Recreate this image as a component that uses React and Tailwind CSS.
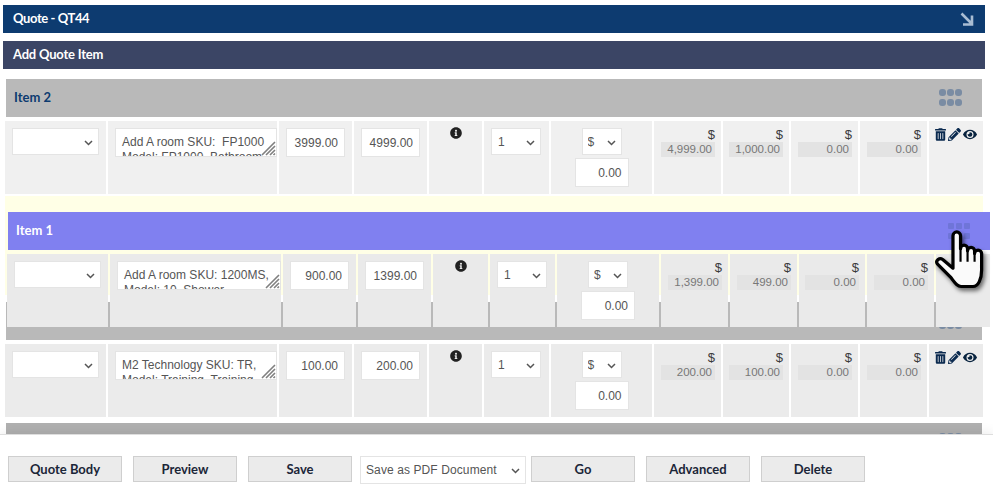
import React from "react";
import { FaEye, FaInfoCircle, FaPencilAlt, FaTrashAlt } from "react-icons/fa";

const staticCols = "grid-cols-[101px_169px_73px_73px_53px_65px_101px_67px_66px_67px_67px_54px]";
const dragCols = "grid-cols-[101px_171px_73px_73px_55px_65px_102px_67px_67px_66px_67px_54px]";

function Dots({ className, dot = "w-[7px] h-[7px] rounded-[3px]" }) {
  return (
    <div className={"grid grid-cols-3 " + className}>
      {[0, 1, 2, 3, 4, 5].map((i) => (
        <span key={i} className={"bg-current " + dot} />
      ))}
    </div>
  );
}

function Hatch() {
  return (
    <svg viewBox="0 0 15 15" className="absolute right-px bottom-px w-[15px] h-[15px]">
      <path d="M1 14L14 1M5 14L14 5M9 14L14 9M12.5 14L14 12.5" stroke="#808080" strokeWidth="1.6" fill="none" />
    </svg>
  );
}

function Chevron() {
  return (
    <svg viewBox="0 0 9 6" className="absolute right-[6px] top-1/2 -mt-[2px] w-[9px] h-[6px] pointer-events-none">
      <path d="M1 1l3.500 3.500L8 1" stroke="#555" strokeWidth="1.500" fill="none" />
    </svg>
  );
}

function NativeSelect({ className, options, value, pad = "pl-[6px]" }) {
  return (
    <div className={"relative " + className}>
      <select
        defaultValue={value}
        className={"appearance-none block w-full h-full bg-white border border-[#e4e4e4] text-[12px] text-[#555] font-['Liberation_Sans',sans-serif] " + pad}
      >
        {options.map((o) => (
          <option key={o}>{o}</option>
        ))}
      </select>
      <Chevron />
    </div>
  );
}

function NumInput({ value, width = "w-[59px]" }) {
  return (
    <input
      readOnly
      value={value}
      className={"h-[29px] bg-white border border-[#e4e4e4] text-right text-[12px] text-[#555] pr-[6px] font-['Liberation_Sans',sans-serif] " + width}
    />
  );
}

function Amount({ value }) {
  return (
    <div className="pt-[6px] pr-[6px] flex flex-col items-end font-['Liberation_Sans',sans-serif]">
      <span className="text-[13px] leading-[15px] text-[#3a3a3a]">$</span>
      <span className="w-[54px] h-[15px] bg-[#e3e3e3] text-[11.500px] leading-[15px] text-right pr-[3px] text-[#777]">{value}</span>
    </div>
  );
}

function ItemRow({ item, cols, bg, dragged }) {
  const cell = bg + " h-[73px]";
  return (
    <div className={"grid gap-x-[2px] " + cols}>
      <div className={cell + " pl-[7px] pt-[7px]"}>
        <NativeSelect className="w-[87px] h-[27px]" options={[""]} value="" />
      </div>
      <div className={cell + " pl-[7px] pt-[7px]"}>
        <div className="relative h-[29px] w-full">
          <textarea
            readOnly
            value={item.desc}
            className="block w-full h-full resize-none overflow-hidden bg-white border border-[#e4e4e4] pl-[6px] pt-[6px] text-[12px] leading-[15px] text-[#555] font-['Liberation_Sans',sans-serif]"
          />
          <Hatch />
        </div>
      </div>
      <div className={cell + " pl-[7px] pt-[7px]"}>
        <NumInput value={item.cost} />
      </div>
      <div className={cell + " pl-[7px] pt-[7px]"}>
        <NumInput value={item.price} />
      </div>
      <div className={cell + " flex justify-center pt-[6px]"}>
        <FaInfoCircle className="text-[#222] w-[12px] h-[12px]" />
      </div>
      <div className={cell + " pl-[7px] pt-[7px]"}>
        <NativeSelect className="w-[50px] h-[27px]" options={["1"]} value="1" />
      </div>
      <div className={cell + " flex flex-col items-center pt-[7px] gap-[3px]"}>
        <NativeSelect className="w-[40px] h-[27px]" options={["$"]} value="$" pad="pl-[5px]" />
        <NumInput value="0.00" width="w-[54px]" />
      </div>
      {item.amounts.map((a, i) => (
        <div key={i} className={cell}>
          <Amount value={a} />
        </div>
      ))}
      <div className={cell + " flex pl-[6px] pt-[7px] gap-[2px] text-[#0b2a4f]"}>
        {!dragged && (
          <>
            <FaTrashAlt className="w-[11px] h-[13px]" />
            <FaPencilAlt className="w-[13px] h-[13px]" />
            <FaEye className="w-[14px] h-[13px] text-[#08233f]" />
          </>
        )}
      </div>
    </div>
  );
}

function ItemHeader({ title, className, textClass, dotClass, dot }) {
  return (
    <div className={"h-[38px] flex items-center justify-between pl-[8px] pr-[20px] " + className}>
      <span className={"pb-[1px] font-['Lato',sans-serif] font-bold text-[13px] " + textClass}>{title}</span>
      <Dots className={dotClass} dot={dot} />
    </div>
  );
}

function Hand() {
  return (
    <svg
      viewBox="0 0 50 62"
      className="absolute left-[933px] top-[226px] w-[54px] h-[67px] drop-shadow-[2px_3px_2px_rgba(0,0,0,0.55)]"
    >
      <path
        d="M18.5 37V9a3.5 3.5 0 0 1 7 0V21a3.2 3.2 0 0 1 6.5 0V23a3.2 3.2 0 0 1 6.5 0V25.500a3.200 3.200 0 0 1 6.500 0V41c0 8-3 15-8 15H26c-4 0-6-4-10-9L4 35c-2-3 2-6 5-4l9.500 8z"
        fill="#fafafa"
        stroke="#000"
        strokeWidth="3"
        strokeLinejoin="round"
      />
      <path d="M25.500 21V33M32 23V33M38.500 25V33" stroke="#000" strokeWidth="2" fill="none" />
    </svg>
  );
}

function FootBtn({ children, className }) {
  return (
    <button className={"h-[26px] w-[104px] pt-[2px] bg-[#ebebeb] border border-[#cfcfcf] font-['Lato',sans-serif] font-bold text-[13px] text-[#1b2638] " + className}>
      {children}
    </button>
  );
}

const item2 = {
  desc: "Add A room SKU:  FP1000\nModel: FP1000, Bathroom",
  cost: "3999.00",
  price: "4999.00",
  amounts: ["4,999.00", "1,000.00", "0.00", "0.00"],
};
const item1 = {
  desc: "Add A room SKU: 1200MS,\nModel: 10, Shower",
  cost: "900.00",
  price: "1399.00",
  amounts: ["1,399.00", "499.00", "0.00", "0.00"],
};
const item3 = {
  desc: "M2 Technology SKU: TR,\nModel: Training, Training",
  cost: "100.00",
  price: "200.00",
  amounts: ["200.00", "100.00", "0.00", "0.00"],
};

const grayDots = "text-[#7a8ca3] gap-x-px gap-y-[3px] mb-[2px]";

export default function App() {
  return (
    <div className="relative w-[993px] h-[490px] overflow-hidden bg-white flex flex-col">
      <div className="flex-1 min-h-0 overflow-hidden pt-[5px]">
        <div className="ml-[3px] w-[982px] h-[28px] bg-[#0d3b70] flex items-center justify-between pl-[10px] pr-[11px]">
          <span className="font-['Lato',sans-serif] font-bold text-[13px] tracking-[-0.4px] text-white">Quote - QT44</span>
          <svg viewBox="0 0 14 14" className="w-[14px] h-[14px]">
            <path d="M1.500 1.500L12 12M12 3.500V12.500H3" stroke="#a9bdd3" strokeWidth="2.600" fill="none" />
          </svg>
        </div>
        <div className="ml-[3px] mt-[8px] w-[982px] h-[28px] bg-[#3b4565] flex items-center pl-[10px]">
          <span className="font-['Lato',sans-serif] font-bold text-[13px] tracking-[-0.2px] text-white">Add Quote Item</span>
        </div>

        <div className="mt-[10px] ml-[5px] w-[978px]">
          <ItemHeader
            title="Item 2"
            className="ml-px w-[976px] bg-[#b9b9b9]"
            textClass="text-[#0d3b70]"
            dotClass={grayDots}
          />
          <div className="mt-[4px]">
            <ItemRow item={item2} cols={staticCols} bg="bg-[#f0f0f0]" />
          </div>
          <div className="mt-[2px] h-[99px] bg-[#ffffe6]" />
          <div className="mt-[7px]">
            <ItemHeader className="ml-px w-[976px] bg-[#b9b9b9]" dotClass={grayDots} />
          </div>
          <div className="mt-[4px]">
            <ItemRow item={item3} cols={staticCols} bg="bg-[#ebebeb]" />
          </div>
          <div className="mt-[6px]">
            <ItemHeader className="ml-px w-[976px] bg-[#b0b0b0]" dotClass={grayDots} />
          </div>
        </div>
      </div>

      <div className="h-[56px] shrink-0 bg-white border-t border-[#dedede] shadow-[0_0_12px_rgba(0,0,0,0.1)] z-10 flex items-start pt-[21px] pl-[8px]">
        <FootBtn className="w-[114px]">Quote Body</FootBtn>
        <FootBtn className="ml-[11px]">Preview</FootBtn>
        <FootBtn className="ml-[11px]">Save</FootBtn>
        <div className="relative ml-[8px] w-[166px] h-[28px]">
          <select className="appearance-none block w-full h-full bg-white border border-[#e4e4e4] pl-[5px] text-[12px] tracking-[0.1px] text-[#555] font-['Liberation_Sans',sans-serif]">
            <option>Save as PDF Document</option>
          </select>
          <Chevron />
        </div>
        <FootBtn className="ml-[5px]">Go</FootBtn>
        <FootBtn className="ml-[11px]">Advanced</FootBtn>
        <FootBtn className="ml-[11px]">Delete</FootBtn>
      </div>

      {/* item being dragged, floats above the list */}
      <div className="absolute left-[7px] top-[212px] w-[986px]">
        <ItemHeader
          title="Item 1"
          className="ml-px w-[982px] bg-[#8080f0]"
          textClass="text-white"
          dotClass="text-[#6f75d8] gap-x-[2px] gap-y-[4px]"
          dot="w-[6px] h-[6px] rounded-[1px]"
        />
        <div className="mt-[4px]">
          <ItemRow item={item1} cols={dragCols} bg="bg-[#eaeaea]" dragged />
        </div>
      </div>
      <Hand />
    </div>
  );
}
